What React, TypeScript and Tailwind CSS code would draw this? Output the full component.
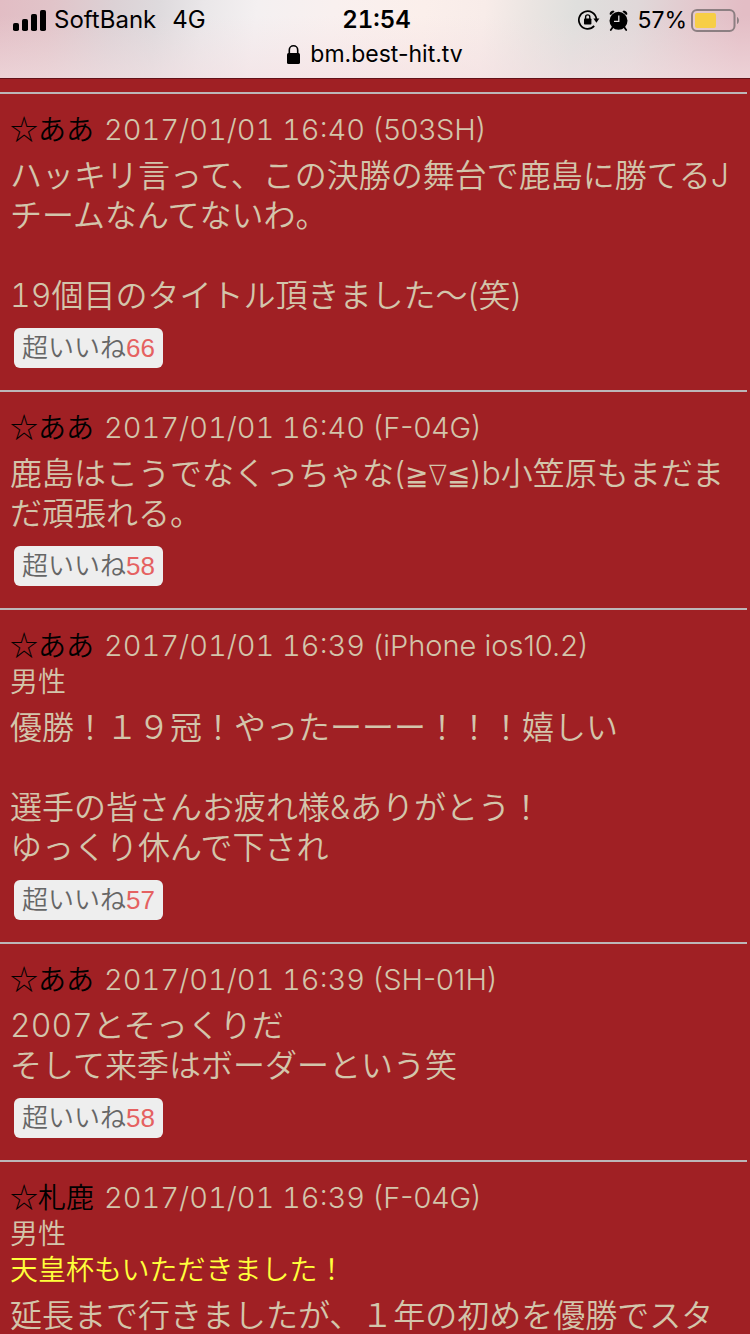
import type { ReactNode } from "react";

type Post = {
  name: string;
  date: string;
  device: string;
  gender?: string;
  title?: string;
  body: ReactNode;
  likes?: number;
};

function Latin({ children }: { children: ReactNode }) {
  return <span className="leading-none tabular-nums">{children}</span>;
}

const posts: Post[] = [
  {
    name: "ああ",
    date: "2017/01/01 16:40",
    device: "(503SH)",
    body: (
      <>
        ハッキリ言って、この決勝の舞台で鹿島に勝てるJ
        <br />
        チームなんてないわ。
        <br />
        <br />
        <Latin>19</Latin>個目のタイトル頂きました〜(笑)
      </>
    ),
    likes: 66,
  },
  {
    name: "ああ",
    date: "2017/01/01 16:40",
    device: "(F-04G)",
    body: (
      <>
        鹿島はこうでなくっちゃな(
        <span className="font-['DejaVu_Sans',sans-serif] text-[28px] leading-none font-extralight">≧∇≦</span>
        )b小笠原もまだま
        <br />
        だ頑張れる。
      </>
    ),
    likes: 58,
  },
  {
    name: "ああ",
    date: "2017/01/01 16:39",
    device: "(iPhone ios10.2)",
    gender: "男性",
    body: (
      <>
        優勝！１９冠！やったーーー！！！嬉しい
        <br />
        <br />
        選手の皆さんお疲れ様&amp;ありがとう！
        <br />
        ゆっくり休んで下され
      </>
    ),
    likes: 57,
  },
  {
    name: "ああ",
    date: "2017/01/01 16:39",
    device: "(SH-01H)",
    body: (
      <>
        <Latin>2007</Latin>とそっくりだ
        <br />
        そして来季はボーダーという笑
      </>
    ),
    likes: 58,
  },
  {
    name: "札鹿",
    date: "2017/01/01 16:39",
    device: "(F-04G)",
    gender: "男性",
    title: "天皇杯もいただきました！",
    body: "延長まで行きましたが、１年の初めを優勝でスタ",
  },
];

function SignalIcon() {
  return (
    <svg width="33" height="21" viewBox="0 0 33 21" aria-hidden="true">
      <rect x="0" y="13" width="6" height="8" rx="1.8" />
      <rect x="9" y="9" width="6" height="12" rx="1.8" />
      <rect x="18" y="4" width="6" height="17" rx="1.8" />
      <rect x="27" y="0" width="6" height="21" rx="1.8" />
    </svg>
  );
}

function RotationLockIcon() {
  return (
    <svg width="22" height="20" viewBox="0 0 22 20" aria-hidden="true">
      <path d="M16.2 15.9A8.8 8.8 0 1 1 18.4 9" fill="none" stroke="#000" strokeWidth="1.7" />
      <path d="M15.4 8.4h6l-3 4.4z" />
      <rect x="6" y="8.5" width="7.4" height="6" rx="0.8" />
      <path d="M7.6 9V7a2.1 2.1 0 0 1 4.2 0v2" fill="none" stroke="#000" strokeWidth="1.4" />
    </svg>
  );
}

function AlarmIcon() {
  return (
    <svg width="19" height="21" viewBox="0 0 19 21" aria-hidden="true">
      <circle cx="9.5" cy="10.8" r="9" />
      <path d="M0.6 4.2Q0.8 0.8 4.2 0.4L5.6 1.6 1.8 5zM18.4 4.2Q18.2 0.8 14.8 0.4L13.4 1.6 17.2 5z" />
      <path d="M3.5 17.5 1.8 20M15.5 17.5l1.7 2.5" stroke="#000" strokeWidth="1.8" strokeLinecap="round" />
      <path d="M9.8 5.6v5.7H5" fill="none" stroke="#e3dfe0" strokeWidth="1.3" />
    </svg>
  );
}

function BatteryIcon() {
  return (
    <svg width="49" height="23" viewBox="0 0 49 23" aria-hidden="true">
      <rect x="1" y="1" width="42.5" height="21" rx="5" fill="none" stroke="#8c7f82" strokeWidth="2" />
      <rect x="4" y="4" width="21" height="15" rx="2" fill="#f7ce46" />
      <path d="M46 8c2.6 1 2.6 6 0 7z" fill="#8c7f82" />
    </svg>
  );
}

function LockIcon() {
  return (
    <svg width="13" height="19" viewBox="0 0 13 19" aria-hidden="true">
      <rect x="0" y="8" width="13" height="11" rx="1.6" />
      <path d="M2.3 9V5a4.2 4.2 0 0 1 8.4 0v4" fill="none" stroke="#000" strokeWidth="1.6" />
    </svg>
  );
}

function BrowserHeader() {
  return (
    <header className="h-[79px] shrink-0 border-b border-[#641219] bg-[linear-gradient(180deg,#f3dfe200_20%,#f3dfe299_100%),linear-gradient(97deg,#e2bdc4_0%,#e1c4c9_7%,#dcd1d5_15%,#dedadd_21%,#eae7e9_27%,#f4f0f1_34%,#f9f0ef_44%,#fbefeb_56%,#f8ece9_64%,#ebe5e2_70%,#dfdfdd_76%,#e0d8d9_84%,#e3c8cd_92%,#e3bdc5_98%)] font-[Inter,sans-serif] text-black">
      <div className="grid h-10 grid-cols-[1fr_auto_1fr] items-center pr-[10px] pl-[13px] text-2xl">
        <div className="flex items-center gap-2">
          <SignalIcon />
          <span>SoftBank</span>
          <span className="ml-2">4G</span>
        </div>
        <time className="font-semibold tabular-nums">21:54</time>
        <div className="flex items-center justify-end gap-1">
          <RotationLockIcon />
          <span className="mx-[5px]">
            <AlarmIcon />
          </span>
          <span className="text-[23px]">57%</span>
          <BatteryIcon />
        </div>
      </div>
      <div className="flex h-7 items-center justify-center gap-[10px] text-[23px]">
        <LockIcon />
        <span>bm.best-hit.tv</span>
      </div>
    </header>
  );
}

function PostItem({ post }: { post: Post }) {
  return (
    <article className="border-t-2 border-[#bdb6b8] pt-[18px] pb-[22px]">
      <div className="px-[10px] text-[28px] leading-9">
        <h2 className="flex h-9 items-baseline gap-[10px] font-[350] whitespace-nowrap">
          <span className="font-['Noto_Sans_CJK_JP',sans-serif] leading-none text-black">☆{post.name}</span>
          <span className="text-[29px]">
            <time className="tabular-nums">{post.date}</time> {post.device}
          </span>
        </h2>
        {post.gender && <p>{post.gender}</p>}
        {post.title && <p className="text-[#ffff3c]">{post.title}</p>}
      </div>
      <p className="mt-2 px-[10px] text-[32px] leading-10 whitespace-nowrap">{post.body}</p>
      {post.likes !== undefined && (
        <button
          type="button"
          className="mt-3 ml-[14px] flex h-10 items-center rounded-md bg-[#eeeeee] px-2 text-[26px] leading-10 text-[#666666]"
        >
          超いいね
          <span className="font-['Liberation_Sans',sans-serif] font-normal text-[#e56161]">{post.likes}</span>
        </button>
      )}
    </article>
  );
}

export default function App() {
  return (
    <div className="flex h-dvh flex-col overflow-hidden bg-[#a02024]">
      <BrowserHeader />
      <main className="mr-[3px] min-h-0 flex-1 overflow-hidden pt-[13px] font-[Inter,'Noto_Sans_CJK_JP',sans-serif] font-[350] text-[#d3c5ab]">
        {posts.map((post, index) => (
          <PostItem key={index} post={post} />
        ))}
      </main>
    </div>
  );
}
